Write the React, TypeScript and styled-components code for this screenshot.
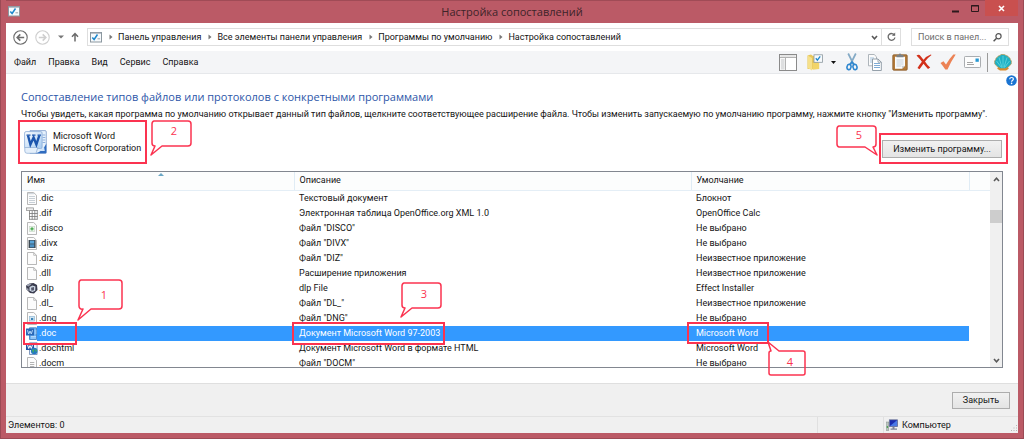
import React from "react";
import styled, { createGlobalStyle, css } from "styled-components";

const RED = "#fb3350";
const TEXT_FONT = 'Roboto, "Noto Sans", sans-serif';
const TITLE_FONT = '"Open Sans", "Noto Sans", sans-serif';

const GlobalStyle = createGlobalStyle`
  *, *::before, *::after { box-sizing: border-box; }
  body { margin: 0; font-family: ${TEXT_FONT}; font-size: 9px; line-height: 15px; color: #141414; }
  button, input { font: inherit; color: inherit; }
  svg { display: block; flex: none; }
`;

const Frame = styled.div`
  display: flex;
  flex-direction: column;
  height: 100vh;
  min-height: 360px;
  padding: 0 5px 5px;
  background: #bb5a66;
  border: 1px solid #9b4a55;
  border-top: 0;
`;

const TitleBar = styled.header`
  display: grid;
  grid-template-columns: 1fr auto 1fr;
  align-items: center;
  height: 23px;
  box-shadow: inset 0 1px 0 #a04b56;
`;

const TitleIcon = styled.div`
  padding-left: 2px;
`;

const Title = styled.h1`
  margin: 0;
  font-family: ${TITLE_FONT};
  font-size: 11px;
  line-height: 16px;
  font-weight: 400;
  color: #3d2429;
`;

const Controls = styled.div`
  display: flex;
  justify-content: flex-end;
  align-self: start;
`;

const Control = styled.button<{ $close?: boolean }>`
  display: flex;
  align-items: center;
  justify-content: center;
  width: ${(p) => (p.$close ? 33 : 20)}px;
  height: 16px;
  padding: 0;
  border: 0;
  background: ${(p) => (p.$close ? "#c9504f" : "transparent")};
`;

const Body = styled.div`
  display: flex;
  flex-direction: column;
  flex: 1;
  min-height: 0;
  background: #fff;
`;

const NavRow = styled.nav`
  display: flex;
  align-items: center;
  height: 28px;
  padding: 0 9px 0 7px;
`;

const NavButton = styled.button<{ $width: number }>`
  display: flex;
  align-items: center;
  justify-content: center;
  width: ${(p) => p.$width}px;
  height: 16px;
  padding: 0;
  border: 0;
  background: none;
`;

const AddressBar = styled.div`
  display: flex;
  flex: 1;
  align-items: center;
  height: 18px;
  margin: 0 10px 0 2px;
  padding-left: 2px;
  border: 1px solid #dedede;
`;

const Crumbs = styled.ol`
  display: flex;
  flex: 1;
  margin: 0;
  padding: 0;
  list-style: none;
`;

const Crumb = styled.li`
  display: flex;
  align-items: center;
  gap: 5px;
  padding-left: 7px;
  white-space: nowrap;

  a { color: inherit; text-decoration: none; }
`;

const Refresh = styled.div`
  display: flex;
  height: 16px;
  border-left: 1px solid #dedede;
`;

const Search = styled.label`
  display: flex;
  align-items: center;
  width: 98px;
  height: 18px;
  padding: 0 6px;
  border: 1px solid #dedede;

  input {
    flex: 1;
    min-width: 0;
    height: 15px;
    padding: 0;
    border: 0;
    outline: 0;
    background: none;
  }
  input::placeholder { color: #6d6d6d; opacity: 1; }
`;

const MenuBar = styled.div`
  display: flex;
  align-items: center;
  justify-content: space-between;
  height: 23px;
  padding: 0 6px 0 8px;
  background: #f4f5f7;
  border-bottom: 1px solid #e6e8eb;
`;

const Group = styled.div<{ $gap: number }>`
  display: flex;
  align-items: center;
  gap: ${(p) => p.$gap}px;
`;

const MenuItem = styled.button`
  padding: 0;
  border: 0;
  background: none;
`;

const Tool = styled.button`
  display: flex;
  align-items: center;
  justify-content: center;
  height: 20px;
  padding: 0;
  border: 0;
  background: none;
`;

const Divider = styled.span`
  width: 1px;
  height: 19px;
  background: #9a9a9a;
`;

const Content = styled.main`
  position: relative;
  display: flex;
  flex-direction: column;
  flex: 1;
  min-height: 0;
  padding: 15px;
`;

const HelpButton = styled.button`
  position: absolute;
  top: 1px;
  right: 1px;
  padding: 0;
  border: 0;
  background: none;
`;

const Heading = styled.h2`
  margin: 0;
  font-family: ${TITLE_FONT};
  font-size: 11px;
  line-height: 16px;
  font-weight: 400;
  color: #2c56a8;
`;

const Hint = styled.p`
  margin: 2px 0 0;
  white-space: nowrap;
`;

const ProgramRow = styled.div`
  display: flex;
  justify-content: space-between;
  align-items: center;
  height: 49px;
  padding: 0 1px 10px 3px;
`;

const Program = styled.div`
  position: relative;
  display: flex;
  align-items: center;
  gap: 6px;
  line-height: 12px;
`;

const ChangeArea = styled.div`
  position: relative;
  display: flex;
  padding-top: 14px;
`;

const PushButton = styled.button<{ $width: number; $height: number }>`
  width: ${(p) => p.$width}px;
  height: ${(p) => p.$height}px;
  padding: 0;
  line-height: 14px;
  background: linear-gradient(#f1f1f1, #e4e4e4);
  border: 1px solid #adadad;
`;

const ListArea = styled.div`
  position: relative;
  display: flex;
  flex: 1;
  min-height: 0;
`;

const ListBox = styled.div`
  display: flex;
  flex: 1;
  min-width: 0;
  overflow: hidden;
  border: 1px solid #828790;
`;

const Scroller = styled.div`
  flex: 1;
  min-width: 0;
  overflow: hidden;
`;

const Table = styled.table`
  width: 100%;
  table-layout: fixed;
  border-collapse: collapse;

  th, td { padding: 0 0 0 5px; text-align: left; font-weight: 400; white-space: nowrap; }
`;

const HeadRow = styled.tr`
  height: 18px;
  background: #fcfdfd;

  th { position: relative; border-bottom: 1px solid #e4eef6; border-right: 1px solid #e0ecf5; }
  th:last-child { border-right: 0; }
`;

const SortMark = styled.svg`
  position: absolute;
  top: 1px;
  left: 50%;
`;

const Row = styled.tr<{ $selected?: boolean }>`
  height: 15px;

  td { height: 15px; line-height: 15px; }
  td:first-child { padding-left: 4px; }

  ${(p) =>
    p.$selected &&
    css`
      color: #fff;
      td { background: #3399ff; }
      td:first-child { background: linear-gradient(90deg, #fff 15px, #3399ff 15px); }
      td:last-child { background: none; }
    `}
`;

const FileName = styled.span`
  display: flex;
  align-items: center;
  gap: 1px;
  height: 15px;
`;

const ScrollBar = styled.div`
  display: flex;
  flex-direction: column;
  align-items: center;
  width: 12px;
  background: #f0f0f0;
`;

const ScrollArrow = styled.button`
  display: flex;
  align-items: center;
  justify-content: center;
  width: 12px;
  height: 14px;
  padding: 0;
  border: 0;
  background: none;
`;

const ScrollTrack = styled.div`
  flex: 1;
  width: 12px;
  padding-top: 24px;
`;

const ScrollThumb = styled.div`
  height: 13px;
  background: #cdcdcd;
`;

const Footer = styled.footer`
  display: flex;
  align-items: center;
  justify-content: flex-end;
  height: 33px;
  padding-right: 8px;
  background: #f0f0f0;
  border-top: 1px solid #dfdfdf;
`;

const StatusBar = styled.div`
  display: flex;
  height: 17px;
  background: #f0f0f0;
  border-top: 1px solid #e2e2e2;
`;

const StatusCell = styled.div<{ $width?: number }>`
  display: flex;
  align-items: center;
  gap: 4px;
  padding: 0 1px 0 2px;
  ${(p) => (p.$width ? `width: ${p.$width}px; border-left: 1px solid #e0e0e0;` : "flex: 1;")}
`;

const SizeGrip = styled.svg`
  align-self: flex-end;
  margin: 0 0 2px auto;
  fill: #b5b5b5;
`;

const Outline = styled.span<{ $top: number; $left: number; $width: number; $height: number }>`
  position: absolute;
  top: ${(p) => p.$top}px;
  left: ${(p) => p.$left}px;
  width: ${(p) => p.$width}px;
  height: ${(p) => p.$height}px;
  border: 2px solid ${RED};
  pointer-events: none;
`;

const CalloutShape = styled.svg<{ $top: number; $left: number }>`
  position: absolute;
  top: ${(p) => p.$top}px;
  left: ${(p) => p.$left}px;
  overflow: visible;
  pointer-events: none;

  path { stroke: ${RED}; stroke-width: 1.5; stroke-linejoin: round; }
  text { fill: ${RED}; font-family: ${TITLE_FONT}; font-size: 11px; text-anchor: middle; }
`;

type CalloutProps = {
  top: number; left: number; width: number; height: number;
  path: string; label: string; x: number; y: number; fill?: string;
};

const Callout = ({ top, left, width, height, path, label, x, y, fill = "#fff" }: CalloutProps) => (
  <CalloutShape $top={top} $left={left} width={width} height={height}>
    <path d={path} fill={fill} />
    <text x={x} y={y}>{label}</text>
  </CalloutShape>
);

const ChecklistIcon = () => (
  <svg width="12" height="11" viewBox="0 0 12 11">
    <rect x=".5" y=".5" width="11" height="9.5" fill="#f7fafc" stroke="#8b979f" />
    <path d="M1 1.3h10" stroke="#a9b5bd" />
    <path d="M2.3 5.4l1.8 2.1 3.4-5" fill="none" stroke="#1d87cc" strokeWidth="1.5" />
    <path d="M7.5 6.8h2.6" stroke="#98a2a8" />
  </svg>
);

const ArrowCircle = ({ color, flip }: { color: string; flip?: boolean }) => (
  <svg width="15" height="15" viewBox="0 0 15 15">
    <g transform={flip ? "rotate(180 7.5 7.5)" : undefined} fill="none" stroke={color}>
      <circle cx="7.5" cy="7.5" r="6.7" strokeWidth="1.1" />
      <path d="M11.2 7.5H4.4M7.3 4.4L4.2 7.5l3.1 3.1" strokeWidth="1.6" />
    </g>
  </svg>
);

const Chevron = ({ up }: { up?: boolean }) => (
  <svg width="7" height="5" viewBox="0 0 7 5">
    <path d={up ? "M1 4l2.5-2.7L6 4" : "M1 1l2.5 2.7L6 1"} fill="none" stroke="#585858" strokeWidth="1.6" />
  </svg>
);

const CrumbArrow = () => (
  <svg width="4" height="6" viewBox="0 0 4 6">
    <path d="M.5.5L3.500 3l-3 2.500z" fill="#777" />
  </svg>
);

const FileIcon = ({ kind }: { kind: string }) => {
  const page = (
    <path d="M1.5.5h6.2l2.8 2.8v9.2h-9z" fill="#fcfcfc" stroke="#a6a6a6" strokeWidth=".8" />
  );
  return (
    <svg width="12" height="13" viewBox="0 0 12 13">
      {kind === "blank" && <>{page}<path d="M7.7.5v2.8h2.8" fill="none" stroke="#a6a6a6" strokeWidth=".7" /></>}
      {kind === "text" && <>{page}<path d="M2 1.7h6M3 4.5h6M3 6.5h6M3 8.5h6M3 10.5h6" stroke="#b9c3cb" strokeWidth=".8" /></>}
      {kind === "sheet" && (
        <>
          <path d="M3 2.5h8.5v10H3z" fill="#fff" />
          <path d="M3 3.5h8.5M3 6.5h8.5M3 9.5h8.5M3 12.3h8.5M3.5 3v9.5M6.2 3v9.5M8.8 3v9.5M11.3 3v9.5" stroke="#777" strokeWidth=".8" />
          <rect x=".4" y=".9" width="7" height="2.6" fill="#eee" stroke="#888" strokeWidth=".7" />
        </>
      )}
      {kind === "green" && <>{page}<rect x="3.3" y="4.3" width="5.4" height="5.2" fill="#eaf4ea" stroke="#c3d5c3" strokeWidth=".6" /><path d="M6 5.3v3.2M4.4 6.9h3.2" stroke="#3da544" strokeWidth="1.2" /></>}
      {kind === "video" && <>{page}<rect x="2.6" y="3" width="7" height="8" fill="#3c4954" /><rect x="4" y="3.6" width="4.2" height="3" fill="#58a4d8" /><rect x="4" y="7.3" width="4.2" height="3" fill="#4b90c2" /></>}
      {kind === "image" && <>{page}<rect x="3.4" y="4.6" width="5.2" height="4.4" fill="#cfe4f3" stroke="#8fb8d5" strokeWidth=".7" /><rect x="5" y="6" width="2.2" height="2" fill="#3c83b6" /></>}
      {kind === "lines" && <>{page}<path d="M4 5.5h4.3M4 7.5h4.3M4 9.5h4.3" stroke="#aaa" strokeWidth=".9" /></>}
      {kind === "package" && (
        <>
          <path d="M0 3.500L3.500 1.500l4-.5 3.500 2 .5 5L8 11.500l-4-.5L.5 7.500z" fill="#3a3c4e" />
          <path d="M0 3.500l3.500-2 2 .8L2.500 4.500zM.5 6l2 .8v2.400l-2-1.700z" fill="#9aa0b0" />
          <path d="M3.500 5l3-1.500 3 1-.3 4.300L6.500 10l-3-1.200z" fill="#c9d4e2" />
          <path d="M5 5.800l3-.8v3.200l-2.600.5z" fill="#55586c" />
        </>
      )}
      {kind === "word" && (
        <>
          <path d="M3.5.8h7v11.7h-7z" fill="#6eb2f3" stroke="#3878bd" strokeWidth=".8" />
          <path d="M8.5 4h2M8.5 6h2M5 9.5h5M5 11h5" stroke="#c8e2fb" strokeWidth=".8" />
          <rect x="0" y="1.5" width="8" height="7" fill="#2a68b7" />
          <path d="M1.5 3.2l1.2 3.8L4 4l1.3 3 1.2-3.8" fill="none" stroke="#b5d8fb" strokeWidth="1" />
        </>
      )}
      {kind === "wordhtml" && (
        <>
          <path d="M3.5.8h7.6v11.7H3.5z" fill="#eaf3fd" stroke="#6483b0" strokeWidth=".8" />
          <rect x="0" y="1" width="8" height="7" fill="#2554a4" />
          <path d="M1.5 2.7l1.2 3.8L4 3.500l1.3 3 1.2-3.8" fill="none" stroke="#fff" strokeWidth="1" />
          <circle cx="8.2" cy="9" r="3.3" fill="#2477c6" />
          <path d="M6 8c2-2 3 0 2 1s0 2-1 2zM9 7l2 1-1 3z" fill="#45ae5a" />
        </>
      )}
    </svg>
  );
};

const WordLogo = () => (
  <svg width="23" height="24" viewBox="0 0 23 24">
    <defs>
      <linearGradient id="wordTile" x1="0" y1="0" x2="1" y2="1">
        <stop offset="0" stopColor="#fff" />
        <stop offset="1" stopColor="#a4caf1" />
      </linearGradient>
    </defs>
    <path d="M6 .6h15q1.300 0 1.300 1.300v20.500q0 1-1.300 1H6z" fill="#e6f1fc" stroke="#7d9ccb" strokeWidth=".8" />
    <path d="M18.500 5h2.800M18.500 7.500h2.800M18.500 10h2.800M18.500 12.500h2.800" stroke="#8fb2e0" />
    <rect x=".6" y="1.600" width="17.500" height="17" rx="1.500" fill="url(#wordTile)" stroke="#86a8d6" strokeWidth=".8" />
    <path d="M.8 17.500h13L12 23.300H3Q.8 23.300.8 21z" fill="#e4effb" stroke="#8aaad2" strokeWidth=".7" />
    <path d="M4 5.500l2.400 9L9.600 7.500l2.800 7L15.300 5.500" fill="none" stroke="#1c56ae" strokeWidth="2.400" />
    <path d="M2.500 5.200h4M8 5.200h3.500M13.500 5.200h3.500" stroke="#1c56ae" strokeWidth="1.300" />
    <path d="M22.300 13.500v9.700H11.500c5-1 8.500-4.500 10.800-9.700z" fill="#2f6cc0" />
    <path d="M14 21c2.500-.8 4.600-2.200 6-4.200l.8 4.200z" fill="#cfe4fa" />
  </svg>
);

const LayoutIcon = () => (
  <svg width="18" height="17" viewBox="0 0 18 17">
    <rect x=".5" y=".5" width="17" height="16" fill="#f8f8f8" stroke="#8a8a8a" />
    <path d="M1.500 2h15" stroke="#d2d2d2" />
    <path d="M1 3.500h16M6.500 3.500V16" stroke="#b2b2b2" />
    <rect x="2" y="5" width="3.500" height="10.500" fill="#dedfe0" />
    <rect x="7" y="4" width="10" height="12" fill="#fff" />
  </svg>
);

const FolderIcon = () => (
  <svg width="16" height="17" viewBox="0 0 16 17">
    <path d="M.5 1.500L4 .5l2 1.500h5.500V15H.5z" fill="#e6c65a" />
    <path d="M.8 1.500L5 4V16.500L.8 14z" fill="#f6e08a" />
    <path d="M5.500 9h6.700v6l-6.700.8z" fill="#f1d468" />
    <rect x="7" y=".8" width="8.500" height="7.500" fill="#f7fafc" stroke="#8b979f" strokeWidth=".8" />
    <path d="M8.800 4.300l1.600 1.800 2.800-3.800" fill="none" stroke="#1d87cc" strokeWidth="1.300" />
  </svg>
);

const ScissorsIcon = () => (
  <svg width="12" height="18" viewBox="0 0 12 18">
    <path d="M2.200.5L7.700 11.500M9.800.5L4.300 11.500" stroke="#84aac6" strokeWidth="1.700" />
    <ellipse cx="3" cy="14" rx="2" ry="2.700" fill="none" stroke="#2f87cf" strokeWidth="1.600" transform="rotate(12 3 14)" />
    <ellipse cx="9" cy="14" rx="2" ry="2.700" fill="none" stroke="#2f87cf" strokeWidth="1.600" transform="rotate(-12 9 14)" />
    <path d="M4 11.500L6 9l2 2.500" fill="none" stroke="#2f87cf" strokeWidth="1.500" />
  </svg>
);

const CopyIcon = () => (
  <svg width="14" height="17" viewBox="0 0 14 17">
    <path d="M.5.5h5.700l2.300 2.300v9H.5z" fill="#fbfbfb" stroke="#a5adb3" strokeWidth=".9" />
    <path d="M2 4h4M2 6h3M2 8h3" stroke="#a5c4df" />
    <path d="M4.500 5h5.500l3.300 3.200v8.300H4.500z" fill="#fff" stroke="#8995a0" strokeWidth=".9" />
    <path d="M10 5v3.200h3.300" fill="none" stroke="#8995a0" strokeWidth=".8" />
    <path d="M6 9.500h6M6 11.500h6M6 13.500h6" stroke="#7fabd5" />
  </svg>
);

const PasteIcon = () => (
  <svg width="16" height="18" viewBox="0 0 16 18">
    <rect x=".8" y="1.800" width="14.400" height="15.400" rx="1" fill="#b37b3a" stroke="#8a5c28" strokeWidth=".8" />
    <path d="M3 3.800h10v9l-3 3H3z" fill="#fbfcfd" />
    <path d="M4.500 7h7M4.500 9h7M4.500 11h7M4.500 13h5" stroke="#b8c5d2" strokeWidth=".8" />
    <path d="M13 12.800h-3v3z" fill="#c9ced3" />
    <path d="M4.500 2h2Q8-.8 9.500 2h2v2.300h-7z" fill="#7c8287" />
  </svg>
);

const DeleteIcon = () => (
  <svg width="16" height="16" viewBox="0 0 16 16">
    <path d="M.5 1.500Q3-.3 4.500 2l3 3.800Q10.500 2 14.800.5l.7.5Q12 3.500 9 7.600q2 3.300 5.200 5.900l-2.200 1.500Q9.700 12.500 7.500 9.700q-2 2.800-4 5.500l-2-1.200Q3.500 10.500 5.900 7.700 3.500 4.500.5 1.500z" fill="#d2301a" />
  </svg>
);

const CheckIcon = () => (
  <svg width="16" height="16" viewBox="0 0 16 16">
    <path d="M.5 9l3-1.700L6 10.600Q9.500 4.500 13.300.5h2.400Q11 7.500 7.500 15.500H5.300Q3 12 .5 9z" fill="#ec8255" />
  </svg>
);

const MailIcon = () => (
  <svg width="17" height="12" viewBox="0 0 17 12">
    <rect x=".5" y=".5" width="16" height="11" rx=".8" fill="#fdfdfd" stroke="#a0a4a8" strokeWidth=".9" />
    <path d="M3 6.500h6M3 8.500h7" stroke="#999" strokeWidth=".9" />
    <rect x="11.500" y="2.500" width="3.300" height="3.300" fill="#2798d3" />
  </svg>
);

const ShellIcon = () => (
  <svg width="18" height="17" viewBox="0 0 18 17">
    <path d="M4.500 12.500h9l1.300 2.300L12 16.500H6l-2.800-1.700z" fill="#d98a2b" />
    <path d="M9 .5Q11 .2 12 1.600q2-.2 2.600 1.700 1.900.5 1.800 2.400 1.500 1.200.9 2.800.4 1.800-1.300 2.600-.8 1.800-2.600 2.200L11.500 14.500h-5l-1.900-1.200Q2.800 12.900 2 11.100.3 10.300.7 8.500.1 6.900 1.600 5.700 1.500 3.800 3.400 3.300 4 1.400 6 1.600 7-.2 9 .5z" fill="#1fb0c3" stroke="#c3954a" strokeWidth=".7" />
    <path d="M9 13.500V2M8 13.500L5 3.500M10 13.500l3-10M7.500 13.500L2.500 7M10.500 13.500l5-6.500" stroke="#6fdde4" strokeWidth=".7" />
  </svg>
);

const ComputerIcon = () => (
  <svg width="12" height="12" viewBox="0 0 12 12">
    <rect x="0" y="3" width="2.800" height="8.500" fill="#bcc6c1" stroke="#808b86" strokeWidth=".5" />
    <path d="M1.300 7v2" stroke="#3a9a3e" />
    <rect x="3.300" y=".8" width="8.300" height="6.800" fill="#1b2cae" stroke="#707a94" strokeWidth=".7" />
    <path d="M4 7L11 1.300V7z" fill="#4a78e6" />
    <path d="M6.500 8h2v1.500H11v1.200H4.500V9.500h2z" fill="#7d8496" />
  </svg>
);

const crumbs = ["Панель управления", "Все элементы панели управления", "Программы по умолчанию", "Настройка сопоставлений"];
const menu = ["Файл", "Правка", "Вид", "Сервис", "Справка"];

const files = [
  { ext: ".dic", icon: "text", about: "Текстовый документ", app: "Блокнот" },
  { ext: ".dif", icon: "sheet", about: "Электронная таблица OpenOffice.org XML 1.0", app: "OpenOffice Calc" },
  { ext: ".disco", icon: "green", about: 'Файл "DISCO"', app: "Не выбрано" },
  { ext: ".divx", icon: "video", about: 'Файл "DIVX"', app: "Не выбрано" },
  { ext: ".diz", icon: "blank", about: 'Файл "DIZ"', app: "Неизвестное приложение" },
  { ext: ".dll", icon: "blank", about: "Расширение приложения", app: "Неизвестное приложение" },
  { ext: ".dlp", icon: "package", about: "dlp File", app: "Effect Installer" },
  { ext: ".dl_", icon: "blank", about: 'Файл "DL_"', app: "Неизвестное приложение" },
  { ext: ".dng", icon: "image", about: 'Файл "DNG"', app: "Не выбрано" },
  { ext: ".doc", icon: "word", about: "Документ Microsoft Word 97-2003", app: "Microsoft Word", selected: true },
  { ext: ".dochtml", icon: "wordhtml", about: "Документ Microsoft Word в формате HTML", app: "Microsoft Word" },
  { ext: ".docm", icon: "lines", about: 'Файл "DOCM"', app: "Не выбрано" },
];

export default function App() {
  return (
    <Frame>
      <GlobalStyle />
      <TitleBar>
        <TitleIcon><ChecklistIcon /></TitleIcon>
        <Title>Настройка сопоставлений</Title>
        <Controls>
          <Control aria-label="Свернуть">
            <svg width="7" height="9"><path d="M0 7.500h7" stroke="#2c191c" strokeWidth="2" /></svg>
          </Control>
          <Control aria-label="Развернуть">
            <svg width="8" height="7"><path d="M.5.5h7v6h-7zM0 1h8" fill="none" stroke="#2c191c" /></svg>
          </Control>
          <Control $close aria-label="Закрыть окно">
            <svg width="7" height="7"><path d="M1 1l5 5M6 1L1 6" stroke="#fff" strokeWidth="1.600" /></svg>
          </Control>
        </Controls>
      </TitleBar>

      <Body>
        <NavRow>
          <NavButton $width={15} aria-label="Назад"><ArrowCircle color="#6d6d6d" /></NavButton>
          <NavButton $width={29} aria-label="Вперёд"><ArrowCircle color="#cfcfcf" flip /></NavButton>
          <NavButton $width={8} aria-label="Последние расположения">
            <svg width="6" height="4"><path d="M0 .5h6L3 3.500z" fill="#777" /></svg>
          </NavButton>
          <NavButton $width={20} aria-label="Вверх">
            <svg width="8" height="10"><path d="M4 9.500V1.500M1 4.700l3-3.200 3 3.200" fill="none" stroke="#6a6a6a" strokeWidth="1.500" /></svg>
          </NavButton>
          <AddressBar>
            <ChecklistIcon />
            <Crumbs>
              {crumbs.map((c) => (
                <Crumb key={c}><CrumbArrow /><a href="#">{c}</a></Crumb>
              ))}
            </Crumbs>
            <NavButton $width={14} aria-label="Список адресов"><Chevron /></NavButton>
            <Refresh>
              <NavButton $width={18} aria-label="Обновить">
                <svg width="9" height="10" viewBox="0 0 9 10">
                  <path d="M7.500 3.200A3.400 3.400 0 107.900 5.500" fill="none" stroke="#6a6a6a" strokeWidth="1.300" />
                  <path d="M8.200.5v3.300H4.900z" fill="#6a6a6a" />
                </svg>
              </NavButton>
            </Refresh>
          </AddressBar>
          <Search>
            <input type="text" aria-label="Поиск" placeholder="Поиск в панел..." />
            <svg width="9" height="9" viewBox="0 0 9 9">
              <circle cx="5.500" cy="3.300" r="2.600" fill="none" stroke="#555" strokeWidth="1.200" />
              <path d="M3.600 5.200L.6 8.300" stroke="#555" strokeWidth="1.500" />
            </svg>
          </Search>
        </NavRow>

        <MenuBar>
          <Group $gap={12}>
            {menu.map((m) => <MenuItem key={m}>{m}</MenuItem>)}
          </Group>
          <Group $gap={6}>
            <Group $gap={10}>
              <Tool aria-label="Область навигации"><LayoutIcon /></Tool>
              <Group $gap={8}>
                <Tool aria-label="Параметры папок"><FolderIcon /></Tool>
                <Tool aria-label="Ещё"><svg width="5" height="3"><path d="M0 0h5L2.500 3z" fill="#111" /></svg></Tool>
              </Group>
              <Tool aria-label="Вырезать"><ScissorsIcon /></Tool>
              <Tool aria-label="Копировать"><CopyIcon /></Tool>
              <Group $gap={8}>
                <Tool aria-label="Вставить"><PasteIcon /></Tool>
                <Tool aria-label="Удалить"><DeleteIcon /></Tool>
                <Tool aria-label="Свойства"><CheckIcon /></Tool>
                <Tool aria-label="Отправить"><MailIcon /></Tool>
              </Group>
            </Group>
            <Divider />
            <Tool aria-label="Classic Shell"><ShellIcon /></Tool>
          </Group>
        </MenuBar>

        <Content>
          <HelpButton aria-label="Справка">
            <svg width="11" height="11" viewBox="0 0 11 11">
              <circle cx="5.500" cy="5.500" r="5.300" fill="#1a74d2" />
              <path d="M3.700 4.200q.1-1.700 1.900-1.700t1.800 1.500q0 .9-1 1.400-.8.500-.8 1.400" fill="none" stroke="#fff" strokeWidth="1.200" />
              <circle cx="5.600" cy="8.400" r=".8" fill="#fff" />
            </svg>
          </HelpButton>
          <Heading>Сопоставление типов файлов или протоколов с конкретными программами</Heading>
          <Hint>
            Чтобы увидеть, какая программа по умолчанию открывает данный тип файлов, щелкните соответствующее
            расширение файла. Чтобы изменить запускаемую по умолчанию программу, нажмите кнопку "Изменить программу".
          </Hint>
          <ProgramRow>
            <Program>
              <WordLogo />
              <div>Microsoft Word<br />Microsoft Corporation</div>
              <Outline $top={-10} $left={-6} $width={129} $height={44} />
              <Callout top={-10} left={126} width={42} height={36} label="2" x={24} y={15}
                path="M4 1h34a3 3 0 013 3v19a3 3 0 01-3 3H12L1 35 5 26a3 3 0 01-3-3V4a3 3 0 012-3z" />
            </Program>
            <ChangeArea>
              <PushButton $width={120} $height={18}>Изменить программу...</PushButton>
              <Outline $top={7} $left={-3} $width={129} $height={31} />
              <Callout top={-1} left={-46} width={42} height={32} label="5" x={23} y={14}
                path="M3 1h34a3 3 0 013 3v15a3 3 0 01-3 3h0L41 30 29 22H3a3 3 0 01-2-3V4a3 3 0 012-3z" />
            </ChangeArea>
          </ProgramRow>

          <ListArea>
            <ListBox>
              <Scroller>
                <Table>
                  <colgroup>
                    <col width="272" /><col width="397" /><col width="278" /><col />
                  </colgroup>
                  <thead>
                    <HeadRow>
                      <th scope="col">
                        Имя
                        <SortMark width="6" height="3"><path d="M3 0l3 3H0z" fill="#6ba7c6" /></SortMark>
                      </th>
                      <th scope="col">Описание</th>
                      <th scope="col">Умолчание</th>
                      <th aria-hidden="true" />
                    </HeadRow>
                  </thead>
                  <tbody>
                    {files.map((f) => (
                      <Row key={f.ext} $selected={f.selected}>
                        <td><FileName><FileIcon kind={f.icon} />{f.ext}</FileName></td>
                        <td>{f.about}</td>
                        <td>{f.app}</td>
                        <td />
                      </Row>
                    ))}
                  </tbody>
                </Table>
              </Scroller>
              <ScrollBar>
                <ScrollArrow aria-label="Прокрутить вверх"><Chevron up /></ScrollArrow>
                <ScrollTrack><ScrollThumb /></ScrollTrack>
                <ScrollArrow aria-label="Прокрутить вниз"><Chevron /></ScrollArrow>
              </ScrollBar>
            </ListBox>
            <Outline $top={151} $left={2} $width={54} $height={23} />
            <Outline $top={151} $left={271} $width={153} $height={23} />
            <Outline $top={151} $left={666} $width={82} $height={22} />
            <Callout top={108} left={56} width={47} height={42} label="1" x={27} y={20}
              path="M4 1h38a3 3 0 013 3v23a3 3 0 01-3 3H14L1 41 6 30a3 3 0 01-4-3V4a3 3 0 012-3z" />
            <Callout top={111} left={379} width={42} height={36} label="3" x={24} y={16}
              path="M4 1h34a3 3 0 013 3v19a3 3 0 01-3 3H12L1 35 5 26a3 3 0 01-3-3V4a3 3 0 012-3z" />
            <Callout top={170} left={746} width={40} height={36} label="4" x={23} y={25} fill="none"
              path="M4 10L1 1l11 9h24a2 2 0 012 2v20a2 2 0 01-2 2H4a2 2 0 01-2-2V12a2 2 0 012-2z" />
          </ListArea>
        </Content>

        <Footer><PushButton $width={58} $height={17}>Закрыть</PushButton></Footer>
        <StatusBar>
          <StatusCell>Элементов: 0</StatusCell>
          <StatusCell $width={66} />
          <StatusCell $width={135}>
            <ComputerIcon />
            Компьютер
            <SizeGrip width="6" height="6">
              <path d="M5 0h1v1H5zM5 2.500h1v1H5zM5 5h1v1H5zM2.500 2.500h1v1h-1zM2.500 5h1v1h-1zM0 5h1v1H0z" />
            </SizeGrip>
          </StatusCell>
        </StatusBar>
      </Body>
    </Frame>
  );
}
